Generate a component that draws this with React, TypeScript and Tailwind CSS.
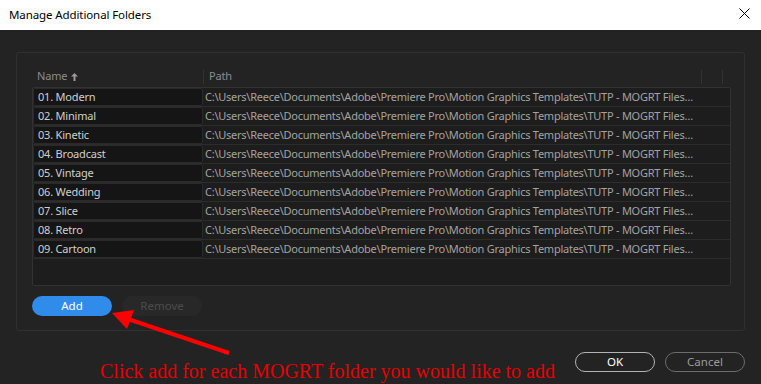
const folders = [
  '01. Modern',
  '02. Minimal',
  '03. Kinetic',
  '04. Broadcast',
  '05. Vintage',
  '06. Wedding',
  '07. Slice',
  '08. Retro',
  '09. Cartoon',
];

const PATH =
  'C:\\Users\\Reece\\Documents\\Adobe\\Premiere Pro\\Motion Graphics Templates\\TUTP - MOGRT Files…';

export default function App() {
  return (
    <div className="relative w-[761px] h-[384px] overflow-hidden bg-[#232323] font-['Noto_Sans',sans-serif]">
      {/* Title bar */}
      <div className="h-[30px] bg-white flex items-center justify-between pl-[9px] pr-[11px]">
        <span className="text-[11.5px] tracking-[-0.1px] text-black">Manage Additional Folders</span>
        <svg width="11" height="11" viewBox="0 0 11 11" className="mt-[-3px]">
          <path d="M0.5 0.5 L10.5 10.5 M10.5 0.5 L0.5 10.5" stroke="#000" strokeWidth="1" />
        </svg>
      </div>

      {/* Main panel */}
      <div className="mx-[16px] mt-[22px] h-[279px] rounded-[3px] border border-[#303030] px-[15px] pt-[13px]">
        {/* Header */}
        <div className="flex h-[21px] items-center text-[11px] tracking-[-0.2px] text-[#8c8c8c]">
          <div className="w-[171px] pl-[5px] flex items-center gap-[4px]">
            <span>Name</span>
            <svg width="7" height="8" viewBox="0 0 7 8">
              <path d="M3.5 0 L7 3.5 L4.5 3.5 L4.5 8 L2.5 8 L2.5 3.5 L0 3.5 Z" fill="#9a9a9a" />
            </svg>
          </div>
          <div className="flex-1 h-[14px] border-l border-[#333] pl-[5px] flex items-center">Path</div>
          <div className="w-[21px] h-[14px] border-l border-[#333]" />
          <div className="w-[7px] h-[14px] border-l border-[#333]" />
        </div>

        {/* Table */}
        <div className="h-[199px] w-[699px] border border-[#323232] bg-[#1d1d1d] rounded-[2px]">
          {folders.map((name) => (
            <div key={name} className="flex h-[19px] border-b border-[#2c2c2c]">
              <div className="w-[170px] h-[18px] rounded-[2px] border border-[#2a2a2a] bg-[#151515] pl-[4px] flex items-center text-[11px] tracking-[-0.2px] text-[#cfcfcf] whitespace-nowrap">
                {name}
              </div>
              <div className="flex-1 pl-[2px] pr-[20px] flex items-center text-[11px] tracking-[-0.25px] text-[#a3a3a3] whitespace-nowrap overflow-hidden">
                {PATH}
              </div>
            </div>
          ))}
        </div>

        {/* Add / Remove */}
        <div className="flex gap-[10px] mt-[10px]">
          <button className="w-[80px] h-[20px] rounded-full bg-[#2f8ceb] text-white text-[11.5px] flex items-center justify-center">
            Add
          </button>
          <button className="w-[80px] h-[20px] rounded-full bg-[#282828] text-[#4c4c4c] text-[11.5px] flex items-center justify-center">
            Remove
          </button>
        </div>
      </div>

      {/* Footer */}
      <div className="flex items-start justify-between pl-[100px] pr-[16px] mt-[21px]">
        <span className="mt-[8px] text-[20px] leading-[22px] text-[#e60000] font-['Liberation_Serif',serif] whitespace-nowrap">
          Click add for each MOGRT folder you would like to add
        </span>
        <div className="flex gap-[10px]">
          <button className="w-[80px] h-[20px] rounded-full border-[1.5px] border-[#b4b4b4] text-white text-[11.5px] flex items-center justify-center">
            OK
          </button>
          <button className="w-[80px] h-[20px] rounded-full border-[1.5px] border-[#6c6c6c] text-[#9c9c9c] text-[11.5px] flex items-center justify-center">
            Cancel
          </button>
        </div>
      </div>

      {/* Annotation arrow */}
      <svg className="absolute left-0 top-0 pointer-events-none" width="761" height="384">
        <line x1="229" y1="353" x2="128" y2="319" stroke="#ff0000" strokeWidth="4" />
        <polygon points="112,313 134,310 127,329" fill="#ff0000" />
      </svg>
    </div>
  );
}
